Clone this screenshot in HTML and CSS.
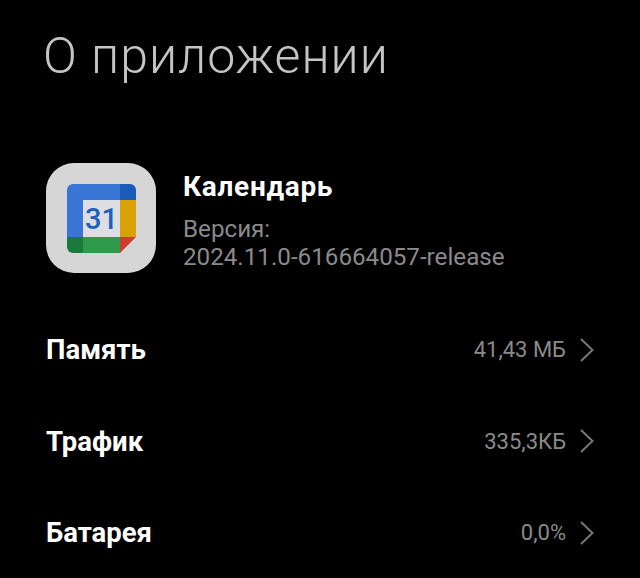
FILE: index.html
```html
<!DOCTYPE html>
<html lang="ru">
<head>
    <meta charset="UTF-8">
    <meta name="viewport" content="width=device-width, initial-scale=1.0">
    <title>О приложении</title>
    <link rel="stylesheet" href="styles.css">
</head>
<body>

<h1 class="page-title">О приложении</h1>

<div class="app-info">
    <div class="app-icon">
        <svg width="69" height="69" viewBox="0 0 69 69">
            <path d="M53 0H6A6 6 0 0 0 0 6V53H16V16H53Z" fill="#3a75d6"/>
            <path d="M53 0H63A6 6 0 0 1 69 6V16H53Z" fill="#1a5ab8"/>
            <rect x="53" y="16" width="16" height="37" fill="#d9a108"/>
            <rect x="16" y="16" width="37" height="37" fill="#dcdee2"/>
            <path d="M16 53H53V69H16Z" fill="#2f9a4c"/>
            <path d="M0 53H16V69H6A6 6 0 0 1 0 63Z" fill="#1b7a3a"/>
            <path d="M53 53H69L53 69Z" fill="#cf3d2c"/>
            <text x="34.5" y="45" class="icon-date" text-anchor="middle">31</text>
        </svg>
    </div>
    <div class="app-text">
        <div class="app-name">Календарь</div>
        <div class="app-version">Версия:<br>2024.11.0-616664057-release</div>
    </div>
</div>

<div class="row">
    <span class="row-label">Память</span>
    <span class="row-value">41,43 МБ</span>
    <svg class="chevron" width="16" height="24" viewBox="0 0 16 24"><path d="M2 1L13.5 12L2 23"/></svg>
</div>
<div class="row">
    <span class="row-label">Трафик</span>
    <span class="row-value">335,3КБ</span>
    <svg class="chevron" width="16" height="24" viewBox="0 0 16 24"><path d="M2 1L13.5 12L2 23"/></svg>
</div>
<div class="row">
    <span class="row-label">Батарея</span>
    <span class="row-value">0,0%</span>
    <svg class="chevron" width="16" height="24" viewBox="0 0 16 24"><path d="M2 1L13.5 12L2 23"/></svg>
</div>

</body>
</html>
```

FILE: styles.css
```css
html {
    background-color: #000;
}

body {
    margin: 0;
    height: 578px;
    overflow: hidden;
    background-color: #000;
    font-family: 'Roboto', sans-serif;
    color: #fff;
}

.page-title {
    margin: 0;
    padding: 28px 0 0 43px;
    font-size: 50px;
    line-height: 56px;
    font-weight: 300;
    letter-spacing: 1px;
    color: #c4c4c4;
}

.app-info {
    display: flex;
    align-items: center;
    gap: 27px;
    margin-top: 79px;
    padding-left: 46px;
}

.app-icon {
    width: 110px;
    height: 110px;
    border-radius: 28px;
    background-color: #d6d6d6;
    display: flex;
    align-items: center;
    justify-content: center;
}

.icon-date {
    font-family: 'Roboto', sans-serif;
    font-size: 29px;
    font-weight: 500;
    fill: #1f5fc0;
}

.app-text {
    padding-top: 5px;
}

.app-name {
    font-size: 28px;
    line-height: 32px;
    font-weight: 700;
    letter-spacing: 0.7px;
    margin-bottom: 12px;
}

.app-version {
    font-size: 24.2px;
    line-height: 28px;
    color: #8a8a8a;
}

.row {
    display: flex;
    align-items: center;
    height: 91.5px;
    padding: 0 45px 0 46px;
}

.app-info + .row {
    margin-top: 31px;
}

.row-label {
    flex: 1;
    font-size: 27.5px;
    font-weight: 700;
}

.row-value {
    font-size: 22px;
    color: #8a8a8a;
    margin-right: 13px;
}

.chevron {
    fill: none;
    stroke: #777;
    stroke-width: 2;
}
```
